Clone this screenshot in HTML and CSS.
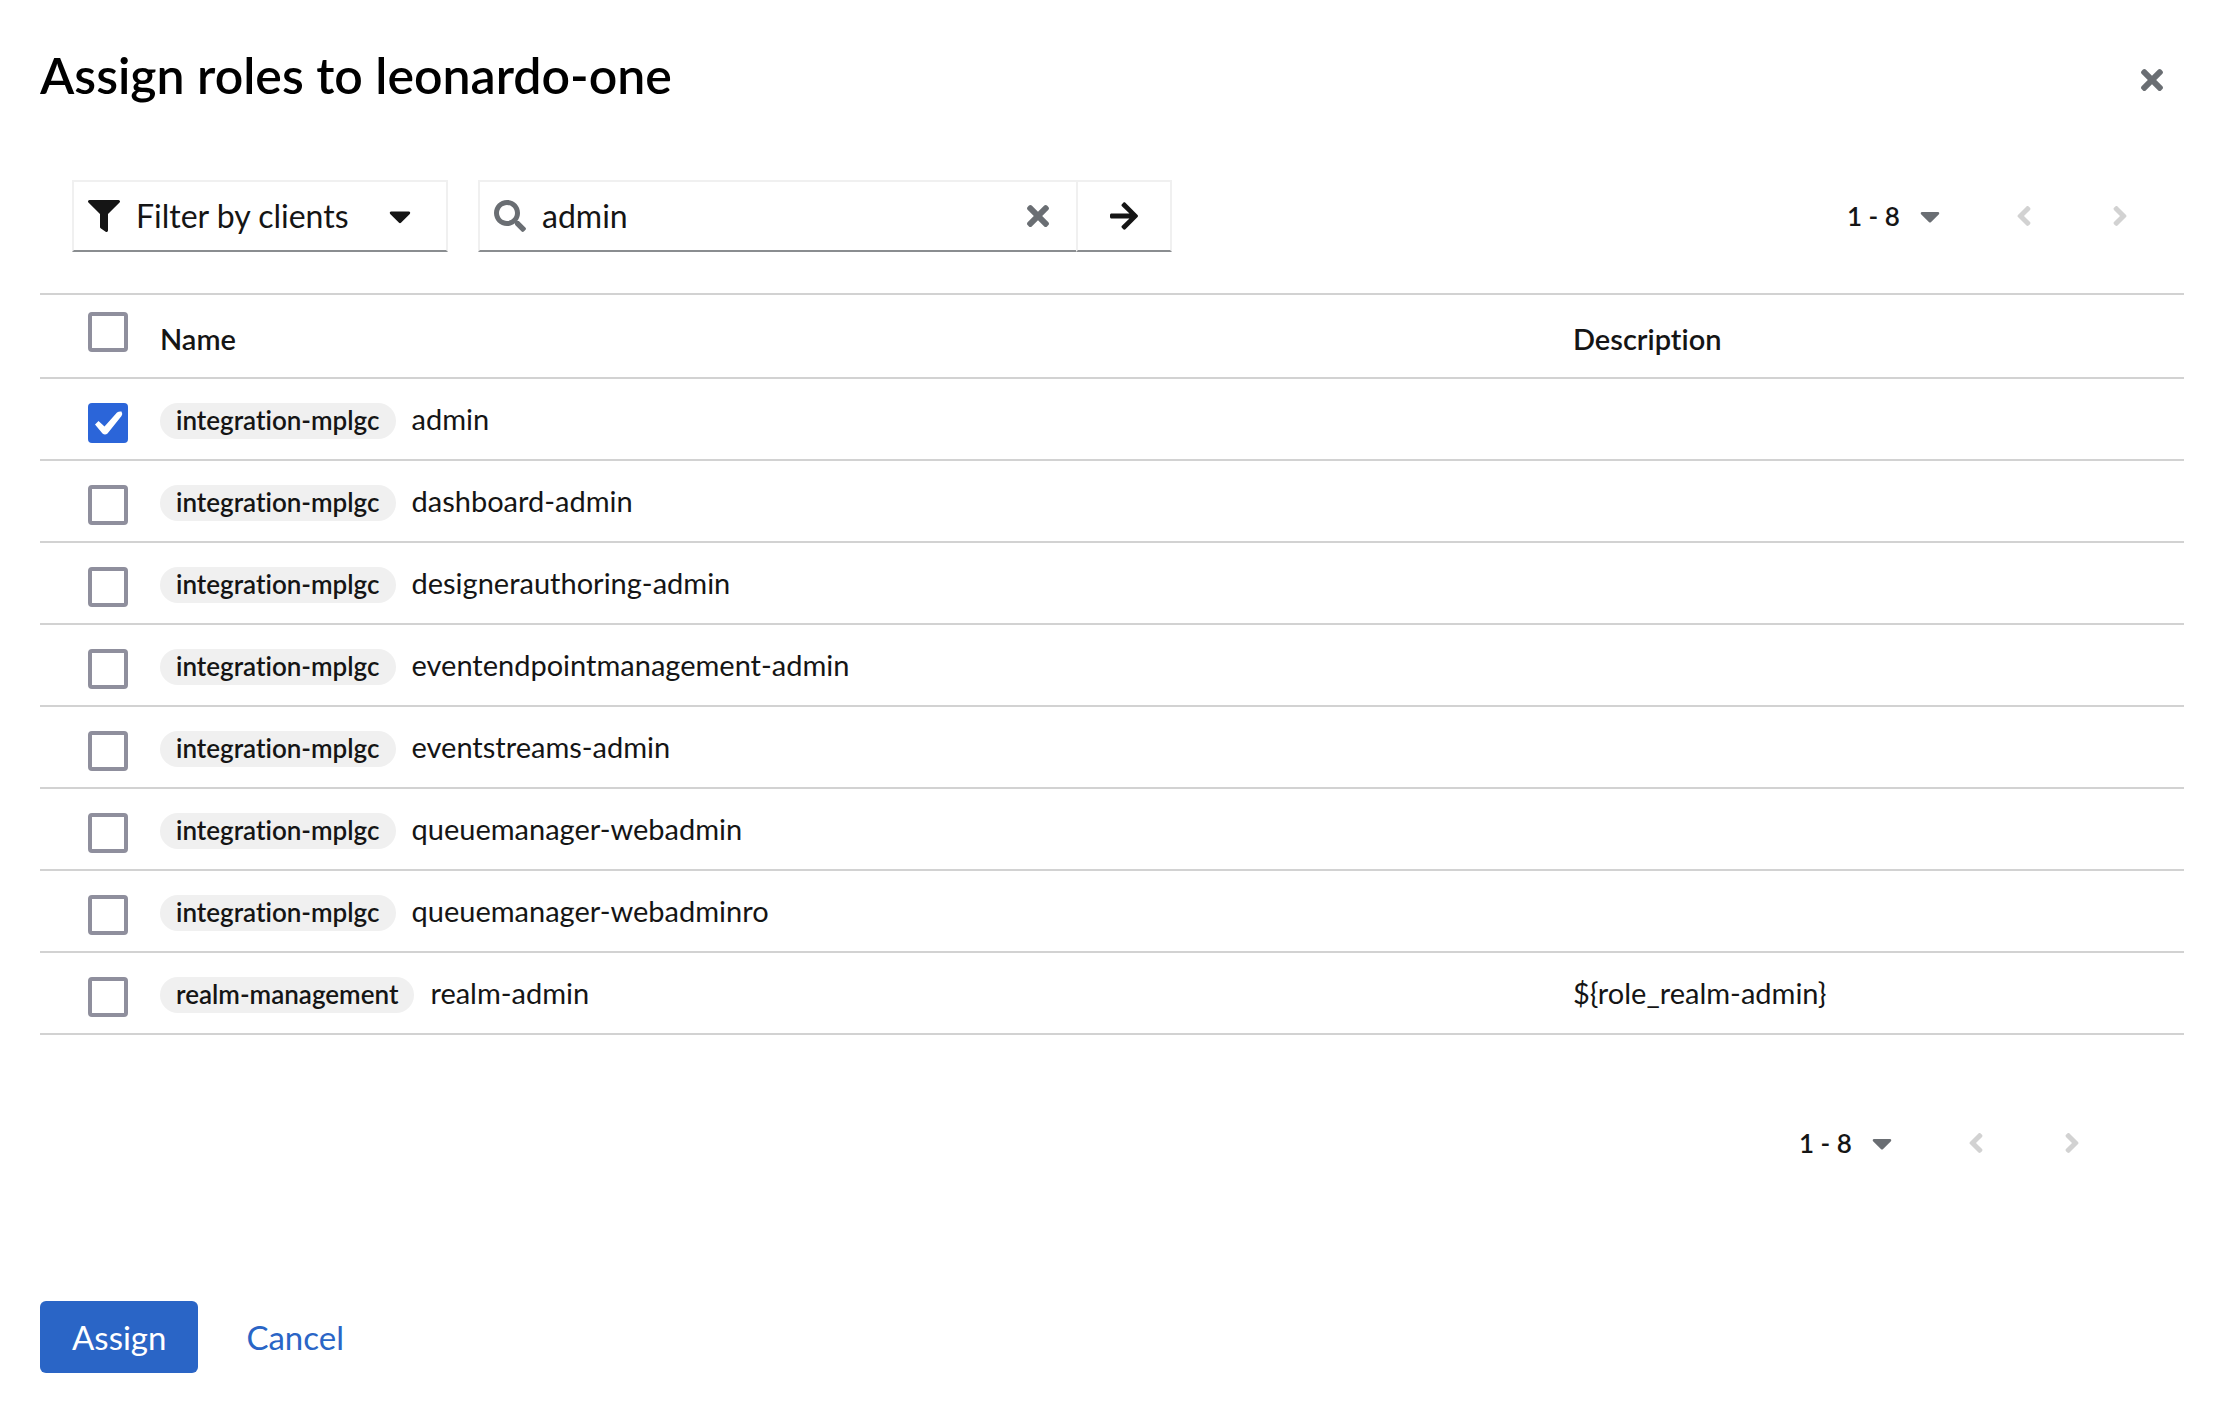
FILE: index.html
```
<!DOCTYPE html>
<html lang="en">
<head>
<meta charset="utf-8">
<meta name="viewport" content="width=device-width, initial-scale=1">
<title>Assign roles to leonardo-one</title>
<link rel="stylesheet" href="styles.css">
</head>
<body>
<svg class="sprite" aria-hidden="true">
  <symbol id="times" viewBox="0 0 352 512"><path d="M242.72 256l100.07-100.07c12.28-12.28 12.28-32.19 0-44.48l-22.24-22.24c-12.28-12.28-32.19-12.28-44.48 0L176 189.28 75.93 89.21c-12.28-12.28-32.19-12.28-44.48 0L9.21 111.45c-12.28 12.28-12.28 32.19 0 44.48L109.28 256 9.21 356.07c-12.28 12.28-12.28 32.19 0 44.48l22.24 22.24c12.28 12.28 32.2 12.28 44.48 0L176 322.72l100.07 100.07c12.28 12.28 32.2 12.28 44.48 0l22.24-22.24c12.28-12.28 12.28-32.19 0-44.48L242.72 256z"/></symbol>
  <symbol id="filter" viewBox="0 0 512 512"><path d="M487.976 0H24.028C2.71 0-8.047 25.866 7.058 40.971L192 225.941V432c0 7.831 3.821 15.17 10.237 19.662l80 55.98C298.02 518.69 320 507.493 320 487.98V225.941l184.947-184.97C520.021 25.896 509.338 0 487.976 0z"/></symbol>
  <symbol id="search" viewBox="0 0 512 512"><path d="M505 442.7L405.3 343c-4.5-4.5-10.6-7-17-7H372c27.6-35.3 44-79.7 44-128C416 93.1 322.9 0 208 0S0 93.1 0 208s93.1 208 208 208c48.3 0 92.7-16.4 128-44v16.3c0 6.4 2.5 12.5 7 17l99.7 99.7c9.4 9.4 24.6 9.4 33.9 0l28.3-28.3c9.4-9.4 9.4-24.6.1-34zM208 336c-70.7 0-128-57.2-128-128 0-70.7 57.2-128 128-128 70.7 0 128 57.2 128 128 0 70.7-57.2 128-128 128z"/></symbol>
  <symbol id="arrow-right" viewBox="0 0 448 512"><path d="M190.5 66.9l22.2-22.2c9.4-9.4 24.6-9.4 33.9 0L441 239c9.4 9.4 9.4 24.6 0 33.9L246.6 467.3c-9.4 9.4-24.6 9.4-33.9 0l-22.2-22.2c-9.5-9.5-9.3-25 .4-34.3L311.4 296H24c-13.3 0-24-10.7-24-24v-32c0-13.3 10.7-24 24-24h287.4L190.9 101.2c-9.8-9.3-10-24.8-.4-34.3z"/></symbol>
  <symbol id="caret" viewBox="0 0 320 512"><path d="M31.3 192h257.3c17.8 0 26.7 21.5 14.1 34.1L174.1 354.8c-7.8 7.8-20.5 7.8-28.3 0L17.2 226.1C4.6 213.5 13.5 192 31.3 192z"/></symbol>
  <symbol id="angle-left" viewBox="0 0 256 512"><path d="M31.7 239l136-136c9.4-9.4 24.6-9.4 33.9 0l22.6 22.6c9.4 9.4 9.4 24.6 0 33.9L127.9 256l96.4 96.4c9.4 9.4 9.4 24.6 0 33.9L201.7 409c-9.4 9.4-24.6 9.4-33.9 0l-136-136c-9.5-9.4-9.5-24.6-.1-34z"/></symbol>
  <symbol id="angle-right" viewBox="0 0 256 512"><path d="M224.3 273l-136 136c-9.4 9.4-24.6 9.4-33.9 0l-22.6-22.6c-9.4-9.4-9.4-24.6 0-33.9l96.4-96.4-96.4-96.4c-9.4-9.4-9.4-24.6 0-33.9L54.3 103c9.4-9.4 24.6-9.4 33.9 0l136 136c9.5 9.4 9.5 24.6.1 34z"/></symbol>
</svg>

<main class="modal">
  <header class="modal-header">
    <h1 class="modal-title">Assign roles to leonardo-one</h1>
    <button class="close" type="button" aria-label="Close"><svg class="icon icon-times"><use href="#times"/></svg></button>
  </header>

  <div class="toolbar">
    <div class="filter">
      <svg class="icon filter-icon"><use href="#filter"/></svg>
      <select class="filter-select" aria-label="Filter type">
        <option>Filter by clients</option>
        <option>Filter by realm roles</option>
      </select>
      <svg class="icon filter-caret"><use href="#caret"/></svg>
    </div>

    <form class="search" role="search">
      <div class="search-field">
        <svg class="icon search-icon"><use href="#search"/></svg>
        <input class="search-input" type="text" value="admin" aria-label="Search">
        <button class="search-clear" type="reset" aria-label="Clear"><svg class="icon icon-times"><use href="#times"/></svg></button>
      </div>
      <button class="search-submit" type="button" aria-label="Search"><svg class="icon icon-arrow"><use href="#arrow-right"/></svg></button>
    </form>

    <nav class="pagination" aria-label="Pagination top">
      <div class="per-page">
        <select class="per-page-select" aria-label="Items per page"><option>1 - 8</option></select>
        <svg class="icon per-page-caret"><use href="#caret"/></svg>
      </div>
      <button class="page-button" type="button" disabled aria-label="Previous page"><svg class="icon icon-angle"><use href="#angle-left"/></svg></button>
      <button class="page-button" type="button" disabled aria-label="Next page"><svg class="icon icon-angle"><use href="#angle-right"/></svg></button>
    </nav>
  </div>

  <table class="roles">
    <colgroup><col class="col-check"><col><col class="col-description"></colgroup>
    <thead>
      <tr>
        <td class="check"><input class="checkbox" type="checkbox" aria-label="Select all rows"></td>
        <th scope="col">Name</th>
        <th scope="col">Description</th>
      </tr>
    </thead>
    <tbody>
      <tr>
        <td class="check"><input class="checkbox" type="checkbox" id="role-1" checked></td>
        <td><label class="role" for="role-1"><span class="badge">integration-mplgc</span><span>admin</span></label></td>
        <td></td>
      </tr>
      <tr>
        <td class="check"><input class="checkbox" type="checkbox" id="role-2"></td>
        <td><label class="role" for="role-2"><span class="badge">integration-mplgc</span><span>dashboard-admin</span></label></td>
        <td></td>
      </tr>
      <tr>
        <td class="check"><input class="checkbox" type="checkbox" id="role-3"></td>
        <td><label class="role" for="role-3"><span class="badge">integration-mplgc</span><span>designerauthoring-admin</span></label></td>
        <td></td>
      </tr>
      <tr>
        <td class="check"><input class="checkbox" type="checkbox" id="role-4"></td>
        <td><label class="role" for="role-4"><span class="badge">integration-mplgc</span><span>eventendpointmanagement-admin</span></label></td>
        <td></td>
      </tr>
      <tr>
        <td class="check"><input class="checkbox" type="checkbox" id="role-5"></td>
        <td><label class="role" for="role-5"><span class="badge">integration-mplgc</span><span>eventstreams-admin</span></label></td>
        <td></td>
      </tr>
      <tr>
        <td class="check"><input class="checkbox" type="checkbox" id="role-6"></td>
        <td><label class="role" for="role-6"><span class="badge">integration-mplgc</span><span>queuemanager-webadmin</span></label></td>
        <td></td>
      </tr>
      <tr>
        <td class="check"><input class="checkbox" type="checkbox" id="role-7"></td>
        <td><label class="role" for="role-7"><span class="badge">integration-mplgc</span><span>queuemanager-webadminro</span></label></td>
        <td></td>
      </tr>
      <tr>
        <td class="check"><input class="checkbox" type="checkbox" id="role-8"></td>
        <td><label class="role" for="role-8"><span class="badge">realm-management</span><span>realm-admin</span></label></td>
        <td>${role_realm-admin}</td>
      </tr>
    </tbody>
  </table>

  <nav class="pagination pagination-bottom" aria-label="Pagination bottom">
    <div class="per-page">
      <select class="per-page-select" aria-label="Items per page"><option>1 - 8</option></select>
      <svg class="icon per-page-caret"><use href="#caret"/></svg>
    </div>
    <button class="page-button" type="button" disabled aria-label="Previous page"><svg class="icon icon-angle"><use href="#angle-left"/></svg></button>
    <button class="page-button" type="button" disabled aria-label="Next page"><svg class="icon icon-angle"><use href="#angle-right"/></svg></button>
  </nav>

  <footer class="modal-footer">
    <button class="button button-primary" type="button">Assign</button>
    <button class="button button-link" type="button">Cancel</button>
  </footer>
</main>
</body>
</html>
```
FILE: styles.css
```
:root {
  --text: #151515;
  --muted: #6a6e73;
  --line: #d2d2d2;
  --field-line: #f0f0f0;
  --field-bottom: #8a8d90;
  --primary: #2a65c6;
}

* {
  box-sizing: border-box;
}

body {
  margin: 0;
  background: #fff;
  color: var(--text);
  font-family: Lato, "Open Sans", sans-serif;
  font-size: 32px;
  font-variant-ligatures: none;
  line-height: 48px;
}

button,
input,
select {
  margin: 0;
  padding: 0;
  border: 0;
  background: transparent;
  color: inherit;
  font: inherit;
}

select {
  appearance: none;
  outline: 0;
}

.sprite {
  display: none;
}

.icon {
  display: block;
  flex: none;
  height: 32px;
  fill: currentColor;
}

.icon-times {
  width: 22px;
}

.icon-arrow {
  width: 28px;
}

.icon-angle {
  width: 16px;
}

.modal {
  padding: 43px 46px 36px 40px;
}

/* Header */
.modal-header {
  display: flex;
  justify-content: space-between;
  align-items: center;
  margin-bottom: 73px;
}

.modal-title {
  margin: 0;
  color: #000;
  font-size: 50px;
  font-weight: 600;
  line-height: 64px;
}

.close {
  display: flex;
  justify-content: center;
  align-items: center;
  width: 64px;
  height: 64px;
  padding-top: 10px;
  color: var(--muted);
}

/* Toolbar */
.toolbar {
  display: flex;
  align-items: center;
  height: 72px;
  margin-bottom: 41px;
  padding: 0 16px 0 32px;
}

.filter,
.search-field,
.search-submit {
  display: flex;
  align-items: center;
  height: 72px;
  border: 2px solid var(--field-line);
  border-bottom-color: var(--field-bottom);
}

.filter {
  width: 376px;
  margin-right: 30px;
  padding: 0 35px 0 14px;
}

.filter-icon,
.search-icon {
  width: 32px;
}

.filter-select {
  flex: 1;
  min-width: 0;
  margin-left: 16px;
}

.filter-caret {
  width: 22px;
  height: 36px;
}

.search {
  display: flex;
  width: 694px;
}

.search-field {
  flex: 1;
  padding-left: 14px;
  border-right: 0;
}

.search-icon {
  color: var(--muted);
}

.search-input {
  flex: 1;
  min-width: 0;
  margin-left: 16px;
  outline: 0;
}

.search-clear {
  display: flex;
  justify-content: center;
  width: 76px;
  color: var(--muted);
}

.search-submit {
  justify-content: center;
  width: 96px;
}

/* Pagination */
.pagination {
  display: flex;
  align-items: center;
  height: 72px;
  margin-left: auto;
}

.pagination-bottom {
  justify-content: flex-end;
  margin-top: 72px;
  padding-right: 64px;
}

.per-page {
  display: flex;
  align-items: center;
  padding-right: 36px;
}

.per-page-select {
  font-size: 26px;
  font-weight: 600;
  line-height: 32px;
}

.per-page-caret {
  width: 20px;
  margin-left: 20px;
  color: var(--muted);
}

.page-button {
  display: flex;
  justify-content: center;
  width: 96px;
  color: var(--line);
}

/* Roles table */
.roles {
  width: 100%;
  border-top: 2px solid var(--line);
  border-spacing: 0;
  table-layout: fixed;
  font-size: 29px;
  line-height: 32px;
}

.col-check {
  width: 120px;
}

.col-description {
  width: 28.5%;
}

.roles th,
.roles td {
  height: 82px;
  padding: 24px 0 16px;
  border-bottom: 2px solid var(--line);
  text-align: left;
  vertical-align: top;
}

.roles th {
  height: 84px;
  padding-top: 28px;
  font-weight: 600;
}

.roles td.check {
  padding: 24px 0 0 48px;
}

.roles thead td.check {
  padding-top: 17px;
}

.checkbox {
  display: block;
  width: 40px;
  height: 40px;
  border: 4px solid #8f8f9d;
  border-radius: 4px;
  appearance: none;
}

.checkbox:checked {
  border: 0;
  background: #2b65d9 url("data:image/svg+xml,%3Csvg xmlns='http://www.w3.org/2000/svg' viewBox='0 0 40 40'%3E%3Cpath d='M7 21.500L10.500 18L16.500 23.500L29 9.500Q31 8 33.500 8.500Q35 11 33.500 13L19.500 30.500Q17 32.500 14.500 30.500Z' fill='%23fff'/%3E%3C/svg%3E") center / 40px no-repeat;
}

.role {
  display: flex;
  align-items: baseline;
  gap: 16px;
}

.badge {
  padding: 0 16px 2px;
  border-radius: 18px;
  background: #f0f0f0;
  font-size: 26px;
  font-weight: 600;
  line-height: 34px;
}

/* Footer */
.modal-footer {
  display: flex;
  gap: 16px;
  margin-top: 122px;
}

.button {
  height: 72px;
  padding: 0 32px;
  border-radius: 6px;
  font-size: 33px;
}

.button-primary {
  background: var(--primary);
  color: #fff;
}

.button-link {
  color: var(--primary);
}
```
